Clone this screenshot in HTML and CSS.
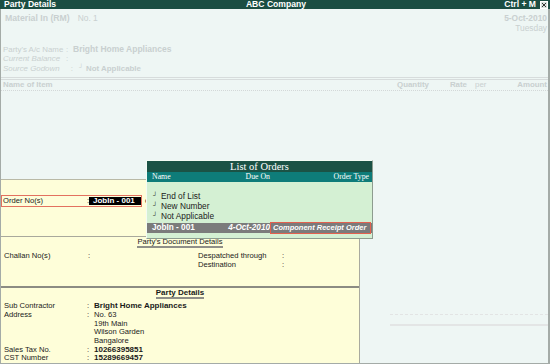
FILE: index.html
```html
<!DOCTYPE html>
<html lang="en">

<head>
    <meta charset="UTF-8">
    <title>Party Details</title>
    <link rel="stylesheet" href="styles.css">
</head>

<body>
    <div class="screen">
        <div class="titlebar">
            <span class="tb-left">Party Details</span>
            <span class="tb-mid">ABC Company</span>
            <span class="tb-right">Ctrl + M
                <svg class="close" width="8" height="8" viewBox="0 0 8 8">
                    <rect x="0.5" y="0.5" width="7" height="7" fill="#d9e2de" stroke="#ffffff"/>
                    <path d="M2 2 L6 6 M6 2 L2 6" stroke="#333" stroke-width="1"/>
                </svg>
            </span>
        </div>

        <div class="body">
            <div class="vch-head">
                <div class="vch-type"><b class="vch-name">Material In (RM)</b><span class="vch-no">No. 1</span></div>
                <div class="vch-date"><b>5-Oct-2010</b><span>Tuesday</span></div>
            </div>

            <div class="party-info">
                <div class="pi-row">
                    <span class="pi-label">Party's A/c Name</span><span class="pi-colon">:</span>
                    <b class="pi-big">Bright Home Appliances</b>
                </div>
                <div class="pi-row">
                    <i class="pi-label">Current Balance</i><span class="pi-colon">:</span>
                </div>
                <div class="pi-row">
                    <i class="pi-label">Source Godown</i><span class="pi-colon wide">:</span>
                    <span class="mark">┘</span><b>Not Applicable</b>
                </div>
            </div>

            <div class="item-head">
                <b>Name of Item</b>
                <b class="right">Quantity</b>
                <b class="right">Rate</b>
                <span class="ih-per">per</span>
                <b class="right">Amount</b>
            </div>

            <div class="items"></div>

            <div class="bottom">
                <div class="yellow">
                    <div class="order-line">
                        <div class="order-row">
                            <span class="order-label">Order No(s)</span>
                            <span class="colon">:</span>
                            <span class="order-value">JobIn - 001</span>
                        </div>
                        <span class="order-more">c</span>
                    </div>

                    <div class="doc">
                        <div class="sec-title"><span>Party's Document Details</span></div>
                        <div class="doc-grid">
                            <span>Challan No(s)</span>
                            <span>:</span>
                            <span>Despatched through</span>
                            <span>:</span>
                            <span></span>
                            <span></span>
                            <span>Destination</span>
                            <span>:</span>
                        </div>
                    </div>

                    <div class="party">
                        <div class="sec-title bold"><span>Party Details</span></div>
                        <div class="party-grid">
                            <span>Sub Contractor</span><span>:</span><b>Bright Home Appliances</b>
                            <span>Address</span><span>:</span><span>No. 63</span>
                            <span></span><span></span><span>19th Main</span>
                            <span></span><span></span><span>Wilson Garden</span>
                            <span></span><span></span><span>Bangalore</span>
                            <span>Sales Tax No.</span><span>:</span><b>10266395851</b>
                            <span>CST Number</span><span>:</span><b>15289669457</b>
                        </div>
                    </div>
                </div>

                <div class="side">
                    <div class="faint"></div>
                </div>
            </div>
        </div>

        <div class="popup">
            <div class="pop-title">List of Orders</div>
            <div class="pop-cols">
                <span>Name</span>
                <span class="right">Due On</span>
                <span class="right">Order Type</span>
            </div>
            <div class="pop-list">
                <div class="pop-item"><span class="mark">┘</span>End of List</div>
                <div class="pop-item"><span class="mark">┘</span>New Number</div>
                <div class="pop-item"><span class="mark">┘</span>Not Applicable</div>
                <div class="pop-sel">
                    <b>JobIn - 001</b>
                    <b class="right"><i>4-Oct-2010</i></b>
                    <b class="sel-type"><i>Component Receipt Order</i></b>
                </div>
            </div>
        </div>
    </div>
</body>

</html>
```

FILE: styles.css
```css
* {
    margin: 0;
    padding: 0;
    box-sizing: border-box;
}

body {
    font-family: "Liberation Sans", Arial, sans-serif;
    font-size: 7.6px;
    color: #1a1a1a;
    background: #ffffff;
}

.right {
    text-align: right;
}

.screen {
    position: relative;
    width: 550px;
    height: 364px;
    overflow: hidden;
}

/* title bar */
.titlebar {
    display: grid;
    grid-template-columns: 1fr auto 1fr;
    align-items: center;
    height: 9px;
    padding: 0 2px 0 4px;
    background: #1b4e43;
    color: #ffffff;
    font-size: 8.6px;
    font-weight: bold;
    line-height: 9px;
}

.tb-right {
    display: flex;
    justify-content: flex-end;
    align-items: center;
    gap: 4px;
}

.close {
    display: block;
}

/* main body, dimmed while the list is open */
.body {
    display: flex;
    flex-direction: column;
    height: 355px;
    border: solid #a4aba7;
    border-width: 0 2px 1px 1px;
    background: #eef6f4;
    color: #c9d0d0;
}

.vch-head {
    display: flex;
    justify-content: space-between;
    padding: 4px 1px 0 4px;
    line-height: 10px;
}

.vch-name {
    font-size: 8.7px;
}

.vch-no {
    margin-left: 8px;
    font-size: 8.4px;
}

.vch-date {
    display: flex;
    flex-direction: column;
    align-items: flex-end;
    font-size: 8.4px;
}

.party-info {
    margin-top: 11.5px;
    padding-left: 2px;
    font-size: 7.9px;
    line-height: 9.5px;
}

.pi-row {
    display: flex;
    align-items: baseline;
}

.pi-label {
    width: 63px;
}

.pi-colon {
    width: 7px;
}

.pi-colon.wide {
    width: 13px;
    text-align: right;
    padding-right: 6px;
}

.pi-big {
    font-size: 8.5px;
}

.party-info .mark {
    width: 7px;
    font-size: 6px;
    position: relative;
    top: -2px;
}

.item-head {
    display: grid;
    grid-template-columns: 1fr 30px 40px 48px 32px;
    margin-top: 3px;
    padding: 0 1px 0 2px;
    border-top: 3px double #d7dcdc;
    border-bottom: 1px dotted #d3d8d8;
    font-size: 7.9px;
    line-height: 10px;
    white-space: nowrap;
}

.ih-per {
    padding-left: 8px;
}

.items {
    height: 88px;
}

/* lower part */
.bottom {
    flex: 1;
    display: flex;
}

.yellow {
    width: 359px;
    background: #fefed9;
    border-top: 1px solid #b9b9a6;
    border-right: 1px solid #a9aa9f;
    color: #1a1a1a;
}

.order-line {
    display: flex;
    align-items: center;
    gap: 3px;
    margin-top: 15px;
}

.order-row {
    display: flex;
    align-items: center;
    width: 141px;
    height: 12px;
    border: 1px solid #e3715f;
}

.order-label {
    width: 85px;
    padding-left: 1px;
}

.colon {
    width: 2px;
}

.order-value {
    flex: 1;
    height: 8px;
    padding-left: 4px;
    background: #000000;
    color: #ffffff;
    font-weight: bold;
    font-size: 8px;
    line-height: 8px;
}

.doc {
    height: 50px;
    margin-top: 29px;
    border-top: 1px solid #a9a99c;
}

.sec-title {
    text-align: center;
    line-height: 10px;
}

.sec-title span {
    display: inline-block;
    line-height: 8px;
    border-bottom: 2px solid #8f8f88;
}

.sec-title.bold {
    font-weight: bold;
    font-size: 8px;
}

.doc-grid {
    display: grid;
    grid-template-columns: 84px 110px 84px 1fr;
    margin-top: 3.5px;
    padding-left: 3px;
    line-height: 9px;
}

.party {
    border-top: 2px solid #8c8c83;
}

.party-grid {
    display: grid;
    grid-template-columns: 83px 7px 1fr;
    margin-top: 3.4px;
    padding-left: 3px;
    line-height: 8.67px;
}

.party-grid b {
    font-size: 8px;
}

.side {
    flex: 1;
    padding-top: 135px;
    padding-left: 30px;
}

.faint {
    height: 12px;
    border-top: 1px dashed #e2e4e4;
    border-bottom: 2px solid #e3e5e5;
}

/* list of orders popup */
.popup {
    position: absolute;
    left: 146px;
    top: 160px;
    width: 227px;
    height: 79px;
    display: flex;
    flex-direction: column;
    background: #d4f0d3;
    border: 1px solid;
    border-color: #f4fbf4 #8d9c8f #8d9c8f #f4fbf4;
}

.pop-title {
    height: 11px;
    background: #1b5245;
    color: #ffffff;
    font-family: "Liberation Serif", "Times New Roman", serif;
    font-size: 10.5px;
    line-height: 11px;
    text-align: center;
}

.pop-cols,
.pop-sel {
    display: grid;
    grid-template-columns: 60px 58px 101px;
    align-items: center;
    padding-left: 5px;
    white-space: nowrap;
}

.pop-cols {
    height: 10px;
    background: #0e7c79;
    color: #ffffff;
    font-family: "Liberation Serif", "Times New Roman", serif;
    font-size: 7.8px;
    line-height: 10px;
}

.pop-cols span:last-child {
    padding-right: 2px;
}

.pop-list {
    padding-top: 10px;
}

.pop-item {
    display: flex;
    align-items: baseline;
    padding-left: 6px;
    font-size: 8.3px;
    line-height: 9.2px;
}

.pop-item .mark {
    width: 8px;
    font-size: 6px;
    position: relative;
    top: -2px;
}

.pop-sel {
    height: 10px;
    margin-top: 0.4px;
    background: #7b7b7b;
    color: #ffffff;
    font-size: 8.2px;
    line-height: 10px;
}

.sel-type {
    height: 12px;
    margin: -1px 0;
    padding-left: 2px;
    border: 1px solid #e3604e;
    font-size: 7.5px;
    line-height: 10px;
    overflow: hidden;
}
```
